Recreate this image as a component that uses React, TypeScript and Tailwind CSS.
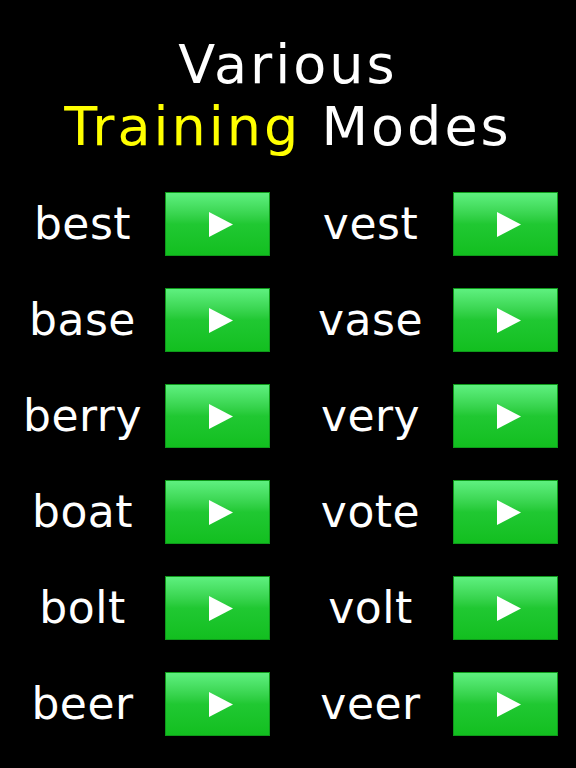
const rows: [string, string][] = [
  ["best", "vest"],
  ["base", "vase"],
  ["berry", "very"],
  ["boat", "vote"],
  ["bolt", "volt"],
  ["beer", "veer"],
];

function PlayButton() {
  return (
    <button className="flex h-[64px] w-[105px] items-center justify-center border border-[#0e9a1a] bg-gradient-to-b from-[#5ef07f] via-[#20c832] via-50% to-[#12bf1f]">
      <svg className="ml-[7px]" width="24" height="25" viewBox="0 0 24 25">
        <polygon points="0,0 24,12.5 0,25" fill="#ffffff" />
      </svg>
    </button>
  );
}

function Entry({ word }: { word: string }) {
  return (
    <div className="flex items-center">
      <div className="w-[165px] text-center text-[44px] leading-none tracking-[0.5px] text-white">
        {word}
      </div>
      <PlayButton />
    </div>
  );
}

export default function App() {
  return (
    <div
      className="flex h-[768px] w-[576px] flex-col bg-black"
      style={{ fontFamily: '"DejaVu Sans", Verdana, sans-serif' }}
    >
      <h1 className="pt-[34px] text-center text-[54px] leading-[62px] tracking-[3px] text-white">
        Various
        <br />
        <span className="text-[#ffff00]">Training</span> Modes
      </h1>
      <div className="mt-[34px] flex flex-col gap-[32px]">
        {rows.map(([a, b]) => (
          <div key={a} className="grid grid-cols-2">
            <Entry word={a} />
            <Entry word={b} />
          </div>
        ))}
      </div>
    </div>
  );
}
